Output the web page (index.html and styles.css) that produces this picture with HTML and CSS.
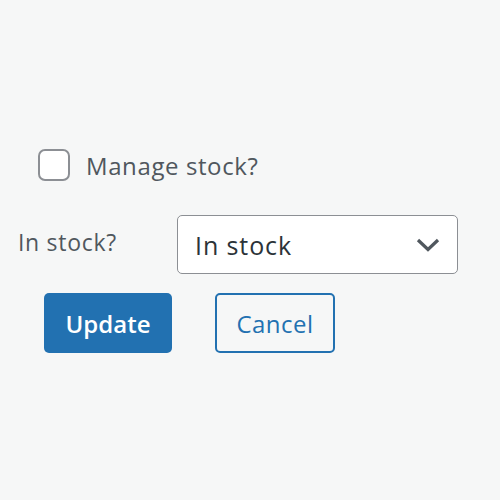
FILE: index.html
```html
<!DOCTYPE html>
<html>
<head>
<meta charset="utf-8">
<link rel="stylesheet" href="styles.css">
</head>
<body>
<div class="panel">
  <label class="manage">
    <span class="box"></span>
    <span class="manage-text">Manage stock?</span>
  </label>
  <div class="stock-row">
    <span class="stock-label">In stock?</span>
    <div class="select">
      <span class="select-text">In stock</span>
      <svg class="chev" width="24" height="14" viewBox="0 0 24 14"><path d="M2 2 L12 11.5 L22 2" fill="none" stroke="#50575e" stroke-width="3.2"/></svg>
    </div>
  </div>
  <div class="actions">
    <span class="btn primary">Update</span>
    <span class="btn secondary">Cancel</span>
  </div>
</div>
</body>
</html>
```
FILE: styles.css
```css
html, body {
  margin: 0;
  padding: 0;
  background: #f6f7f7;
  width: 500px;
  height: 500px;
  overflow: hidden;
}
.panel {
  font-family: "Open Sans", "Noto Sans", sans-serif;
  padding-top: 149px;
  display: flex;
  flex-direction: column;
}
.manage {
  display: flex;
  align-items: center;
  padding-left: 38px;
  height: 32px;
}
.box {
  width: 28px;
  height: 28px;
  border: 2px solid #8c8f94;
  border-radius: 7px;
  background: #fff;
}
.manage-text {
  margin-left: 16px;
  font-size: 24px;
  letter-spacing: 0.6px;
  color: #50575e;
}
.stock-row {
  display: flex;
  align-items: flex-start;
  margin-top: 34px;
  padding-left: 18px;
}
.stock-label {
  width: 159px;
  font-size: 23px;
  letter-spacing: 0.7px;
  color: #50575e;
  margin-top: 11px;
}
.select {
  box-sizing: border-box;
  width: 281px;
  height: 59px;
  border: 1.5px solid #8c8f94;
  border-radius: 5px;
  background: #fff;
  display: flex;
  align-items: center;
  justify-content: space-between;
  padding: 0 17px 0 17px;
}
.select-text {
  font-size: 25px;
  letter-spacing: 0.9px;
  color: #2c3338;
}
.chev { display: block; }
.actions {
  display: flex;
  margin-top: 19px;
  padding-left: 44px;
  gap: 43px;
}
.btn {
  box-sizing: border-box;
  height: 60px;
  display: flex;
  align-items: center;
  justify-content: center;
  font-size: 24px;
  border-radius: 5px;
}
.primary {
  width: 128px;
  background: #2271b1;
  color: #fff;
  font-weight: 600;
}
.secondary {
  width: 120px;
  border: 2px solid #2271b1;
  color: #2271b1;
  background: #f6f7f7;
  letter-spacing: 0.5px;
}
```
